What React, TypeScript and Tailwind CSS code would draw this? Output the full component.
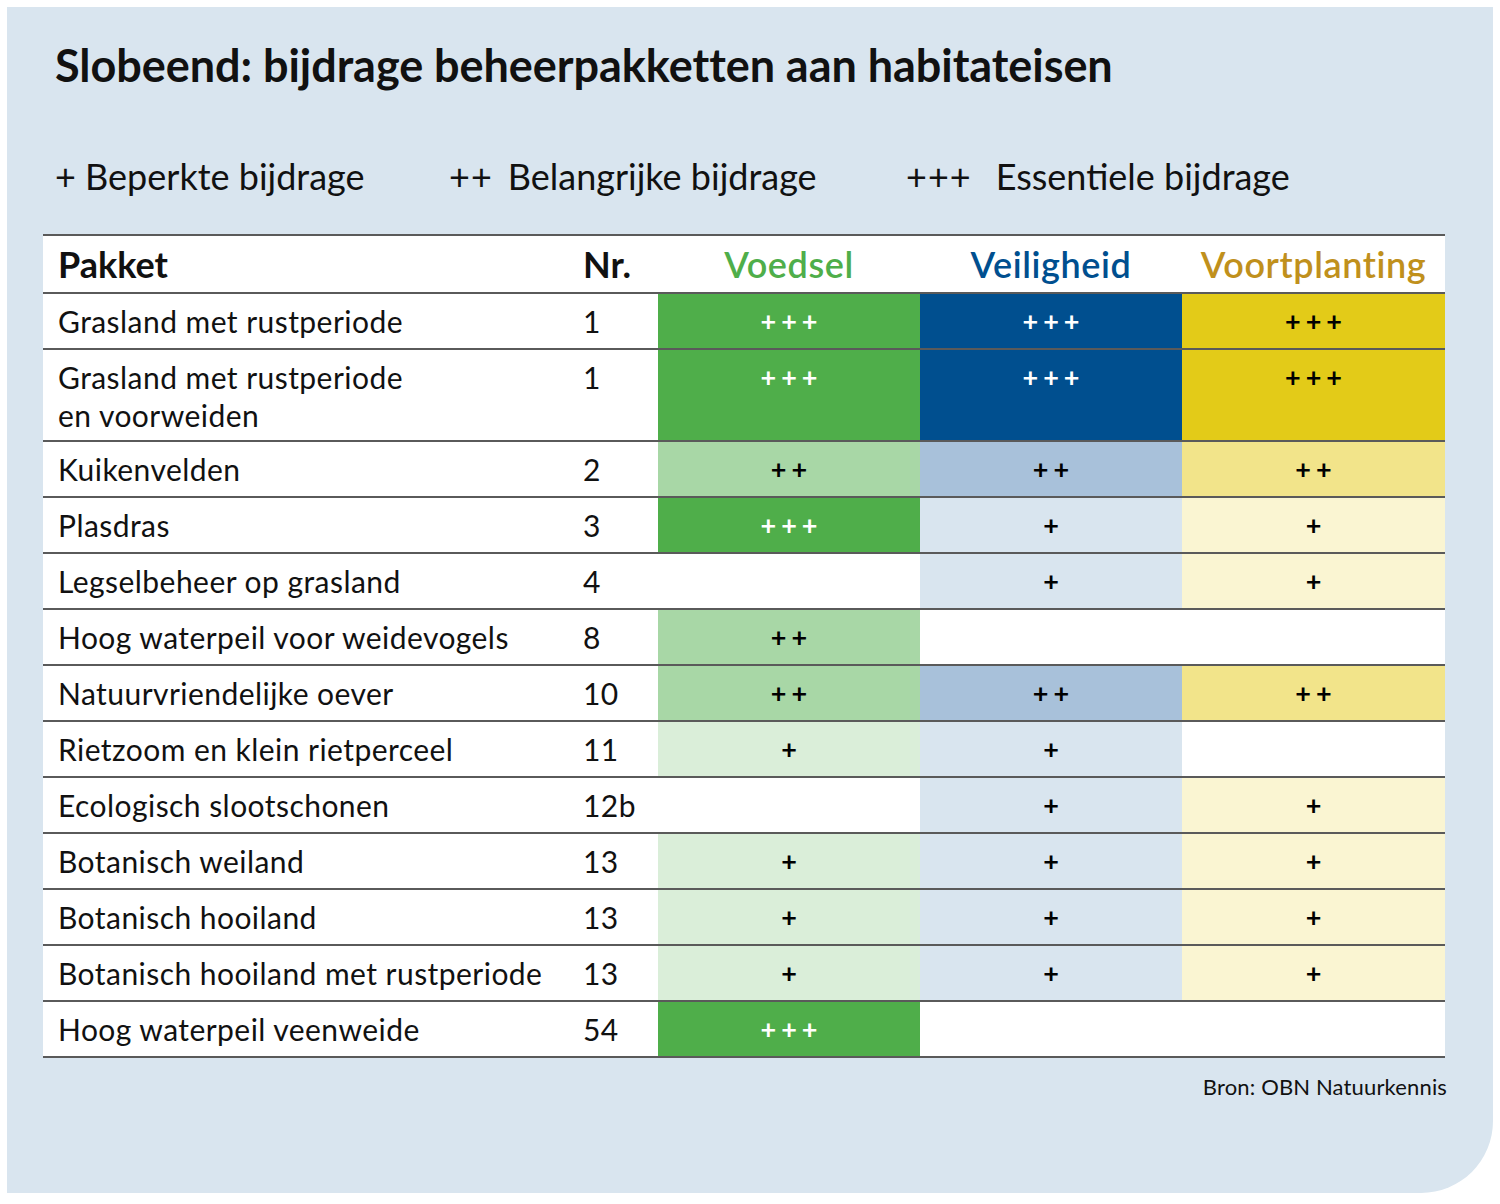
import React from "react";

type Cell = { v: string; bg: string; fg: string } | null;

const G3 = { bg: "bg-[#4fae4a]", fg: "text-white" };
const G2 = { bg: "bg-[#a8d7a6]", fg: "text-black" };
const G1 = { bg: "bg-[#daeed9]", fg: "text-black" };
const B3 = { bg: "bg-[#004f8f]", fg: "text-white" };
const B2 = { bg: "bg-[#a8c1da]", fg: "text-black" };
const B1 = { bg: "bg-[#d9e5ef]", fg: "text-black" };
const Y3 = { bg: "bg-[#e3cb18]", fg: "text-black" };
const Y2 = { bg: "bg-[#f2e48a]", fg: "text-black" };
const Y1 = { bg: "bg-[#faf5d2]", fg: "text-black" };

const c = (v: string, s: { bg: string; fg: string }): Cell => ({ v, ...s });

const rows: { name: string[]; nr: string; cells: Cell[] }[] = [
  { name: ["Grasland met rustperiode"], nr: "1", cells: [c("+++", G3), c("+++", B3), c("+++", Y3)] },
  { name: ["Grasland met rustperiode", "en voorweiden"], nr: "1", cells: [c("+++", G3), c("+++", B3), c("+++", Y3)] },
  { name: ["Kuikenvelden"], nr: "2", cells: [c("++", G2), c("++", B2), c("++", Y2)] },
  { name: ["Plasdras"], nr: "3", cells: [c("+++", G3), c("+", B1), c("+", Y1)] },
  { name: ["Legselbeheer op grasland"], nr: "4", cells: [null, c("+", B1), c("+", Y1)] },
  { name: ["Hoog waterpeil voor weidevogels"], nr: "8", cells: [c("++", G2), null, null] },
  { name: ["Natuurvriendelijke oever"], nr: "10", cells: [c("++", G2), c("++", B2), c("++", Y2)] },
  { name: ["Rietzoom en klein rietperceel"], nr: "11", cells: [c("+", G1), c("+", B1), null] },
  { name: ["Ecologisch slootschonen"], nr: "12b", cells: [null, c("+", B1), c("+", Y1)] },
  { name: ["Botanisch weiland"], nr: "13", cells: [c("+", G1), c("+", B1), c("+", Y1)] },
  { name: ["Botanisch hooiland"], nr: "13", cells: [c("+", G1), c("+", B1), c("+", Y1)] },
  { name: ["Botanisch hooiland met rustperiode"], nr: "13", cells: [c("+", G1), c("+", B1), c("+", Y1)] },
  { name: ["Hoog waterpeil veenweide"], nr: "54", cells: [c("+++", G3), null, null] },
];

const font = { fontFamily: "Lato, 'Noto Sans', sans-serif" };

export default function App() {
  return (
    <div className="bg-white w-[1500px] h-[1204px] p-[7px]" style={font}>
      <div className="bg-[#d9e5ef] w-[1486px] h-[1186px] rounded-br-[72px] pt-[31px] pl-[36px] pr-[48px]">
        <h1 className="pl-[12px] text-[45px] leading-[54px] font-bold text-[#111] tracking-[-0.05px]">
          Slobeend: bijdrage beheerpakketten aan habitateisen
        </h1>
        <div className="flex pl-[12px] mt-[63px] text-[36px] leading-[42px] text-[#111]">
          <span className="w-[394px]">+ Beperkte bijdrage</span>
          <span className="w-[457px]">
            <span className="tracking-[1px]">++</span>
            <span className="ml-[15px]">Belangrijke bijdrage</span>
          </span>
          <span>
            <span className="tracking-[1px]">+++</span>
            <span className="ml-[24px]">Essentiele bijdrage</span>
          </span>
        </div>
        <div className="mt-[37px] bg-white w-[1402px] border-t-2 border-[#5a5a5a]">
          <div className="grid grid-cols-[540px_75px_262px_262px_263px] h-[58px] border-b-2 border-[#5a5a5a] items-center text-[36px] font-bold">
            <div className="pl-[15px] text-[#111]">Pakket</div>
            <div className="text-[#111]">Nr.</div>
            <div className="text-center text-[#4fae4a] font-semibold tracking-[0.6px]">Voedsel</div>
            <div className="text-center text-[#004f8f] font-semibold tracking-[0.6px]">Veiligheid</div>
            <div className="text-center text-[#c0901c] font-semibold tracking-[0.6px]">Voortplanting</div>
          </div>
          {rows.map((r, i) => (
            <div
              key={i}
              className="grid grid-cols-[540px_75px_262px_262px_263px] border-b-2 border-[#5a5a5a] text-[30px] leading-[36px] tracking-[0.45px] text-[#111]"
            >
              <div className={r.name.length > 1 ? "pl-[15px] pt-[9px] pb-[7px]" : "pl-[15px] py-[9px]"}>
                {r.name.map((n, j) => (
                  <div key={j} className={j > 0 ? "mt-[2px]" : ""}>{n}</div>
                ))}
              </div>
              <div className="py-[9px]">{r.nr}</div>
              {r.cells.map((cell, k) =>
                cell ? (
                  <div key={k} className={`${cell.bg} ${cell.fg} py-[9px] text-center font-bold text-[27px] tracking-[5px] pl-[5px]`}>
                    {cell.v}
                  </div>
                ) : (
                  <div key={k} className="bg-white" />
                )
              )}
            </div>
          ))}
        </div>
        <div className="w-[1404px] text-right text-[22px] leading-[30px] mt-[14px] text-[#111] tracking-[0.15px]">
          Bron: OBN Natuurkennis
        </div>
      </div>
    </div>
  );
}
